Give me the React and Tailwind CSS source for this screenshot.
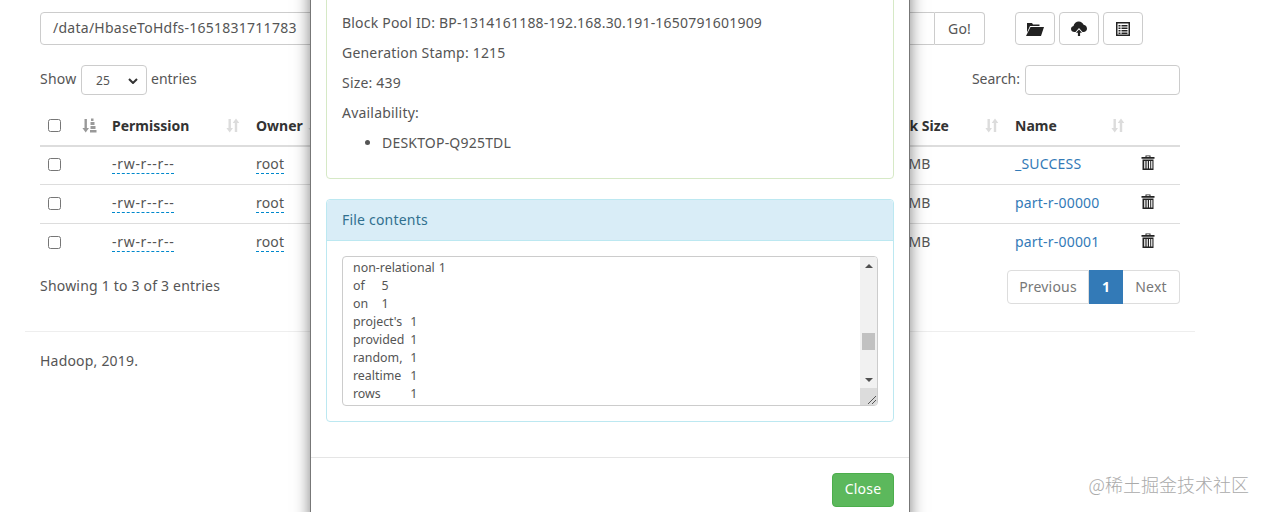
import React from 'react';

const FONT = "font-['Noto_Sans','Open_Sans',sans-serif]";

const files = [
  { name: '_SUCCESS', size: '0 B' },
  { name: 'part-r-00000', size: '439 B' },
  { name: 'part-r-00001', size: '421 B' },
];

const lines = [
  'non-relational\t1',
  'of\t5',
  'on\t1',
  "project's\t1",
  'provided\t1',
  'random,\t1',
  'realtime\t1',
  'rows\t1',
];

function SortIcon() {
  return (
    <svg width="14" height="15" viewBox="0 0 14 15" className="text-[#dcdcdc]" fill="currentColor">
      <path d="M2.500 1h2.400v9h2.100L3.700 14.500.4 10h2.100z" />
      <path d="M10 .5l3.300 4.500h-2.100v9H8.800V5H6.700z" />
    </svg>
  );
}

function SortActiveIcon() {
  return (
    <svg width="15" height="15" viewBox="0 0 15 15" className="text-[#999]" fill="currentColor">
      <path d="M2.500 1h2.400v9H7L3.700 14.500.4 10h2.100z" />
      <path d="M9 .5h2.500V3H9zM8.500 4h4v3h-4zM8.500 8h5v3h-5zM8 12h6.500v2.500H8z" />
    </svg>
  );
}

function TrashIcon() {
  return (
    <svg width="14" height="15" viewBox="0 0 14 15" fill="currentColor" className="text-[#222]">
      <path d="M4.500 2V.5h5V2h4v1.700H.5V2zM5.500 1.300V2h3v-.7z" fillRule="evenodd" />
      <path d="M1.500 4.500h11V15h-11zM3.200 6v7.500h1.200V6zM5.600 6v7.500h1.200V6zM8 6v7.500h1.200V6zM10.200 6v7.500h1.200V6z" fillRule="evenodd" />
    </svg>
  );
}

function FolderIcon() {
  return (
    <svg width="18" height="14" viewBox="0 0 18 14" fill="currentColor" className="text-[#222]">
      <path d="M1 1h5l1 1.500h6.500V4H4L1 10.500V1z" />
      <path d="M4.500 5H18l-3 9H0z" />
    </svg>
  );
}

function CloudUpIcon() {
  return (
    <svg width="16" height="15" viewBox="0 0 16 15" fill="currentColor" className="text-[#222]">
      <path d="M4.500 11H3.500C1.500 11 0 9.700 0 8c0-1.500 1-2.700 2.500-3C3 2.300 5.200.5 7.800.5c2.200 0 4 1.300 4.800 3.200C14.600 4 16 5.700 16 7.700c0 1.800-1.500 3.300-3.500 3.300h-1L8 7z" />
      <path d="M8 8.500l3 3.200H9.100V15H6.900v-3.300H5z" />
    </svg>
  );
}

function ListIcon() {
  return (
    <svg width="14" height="14" viewBox="0 0 14 14" className="text-[#222]" fill="currentColor">
      <path
        fillRule="evenodd"
        d="M0 0h14v14H0zM1.500 1.500v11h11v-11zM2.500 3h2v1.500h-2zM5.500 3h6v1.500h-6zM2.500 5.500h2V7h-2zM5.500 5.500h6V7h-6zM2.500 8h2v1.500h-2zM5.500 8h6v1.500h-6zM2.500 10.500h2V12h-2zM5.500 10.500h6V12h-6z"
      />
    </svg>
  );
}

function IconButton({ children }) {
  return (
    <button className="w-10 h-[33px] flex items-center justify-center bg-white border border-[#ccc] rounded">
      {children}
    </button>
  );
}

function Th({ children, sort = true }) {
  return (
    <th className="px-2 pt-[1px] text-left font-bold tracking-normal text-[#333] align-middle">
      <div className="flex items-center justify-between whitespace-nowrap">
        <span>{children}</span>
        {sort && <SortIcon />}
      </div>
    </th>
  );
}

function Dashed({ children, wide }) {
  return (
    <span className={`border-b border-dashed border-[#0088cc] text-[#555] ${wide ? 'tracking-[0.7px]' : ''}`}>
      {children}
    </span>
  );
}

function FileTable() {
  return (
    <table className="w-full table-fixed border-collapse text-[#555]">
      <colgroup>
        <col className="w-[34px]" />
        <col className="w-[30px]" />
        <col className="w-[144px]" />
        <col className="w-[82px]" />
        <col className="w-[90px]" />
        <col className="w-[80px]" />
        <col className="w-[200px]" />
        <col className="w-[172px]" />
        <col className="w-[135px]" />
        <col className="w-[126px]" />
        <col className="w-[47px]" />
      </colgroup>
      <thead>
        <tr className="h-[41px] border-b-2 border-[#ddd]">
          <th className="px-2 text-left align-middle">
            <input type="checkbox" className="block w-[13px] h-[13px]" />
          </th>
          <th className="px-2 text-left align-middle">
            <SortActiveIcon />
          </th>
          <Th>Permission</Th>
          <Th>Owner</Th>
          <Th>Group</Th>
          <Th>Size</Th>
          <Th>Last Modified</Th>
          <Th>Replication</Th>
          <Th>Block Size</Th>
          <Th>Name</Th>
          <th />
        </tr>
      </thead>
      <tbody>
        {files.map((f, i) => (
          <tr key={f.name} className={i === 0 ? 'h-[38px]' : 'h-[39px] border-t border-[#ddd]'}>
            <td className={i === 0 ? 'px-2 pb-[2px]' : 'px-2'}>
              <input type="checkbox" className="block w-[13px] h-[13px]" />
            </td>
            <td />
            <td className="px-2 pb-[2px]"><Dashed wide>-rw-r--r--</Dashed></td>
            <td className="px-2 pb-[2px]"><Dashed>root</Dashed></td>
            <td className="px-2 pb-[2px]"><Dashed>supergroup</Dashed></td>
            <td className="px-2 pb-[2px]">{f.size}</td>
            <td className="px-2 pb-[2px]">May 06 18:08</td>
            <td className="px-2 pb-[2px]">1</td>
            <td className="px-2 pb-[2px]">128 MB</td>
            <td className="px-2 pb-[2px] text-[#337ab7]">{f.name}</td>
            <td className="px-2 pb-[5px]"><TrashIcon /></td>
          </tr>
        ))}
      </tbody>
    </table>
  );
}

function Scrollbar() {
  return (
    <div className="w-[17px] h-full bg-[#f1f1f1] flex flex-col items-center shrink-0">
      <div className="h-[17px] flex items-center justify-center">
        <div className="w-0 h-0 border-x-[4px] border-x-transparent border-b-[4px] border-b-[#505050]" />
      </div>
      <div className="h-[59px]" />
      <div className="w-[13px] h-[17px] bg-[#c1c1c1]" />
      <div className="flex-1" />
      <div className="h-[17px] flex items-center justify-center">
        <div className="w-0 h-0 border-x-[4px] border-x-transparent border-t-[4px] border-t-[#505050]" />
      </div>
      <div className="w-full h-[17px] bg-[#dcdcdc] flex items-end justify-end">
        <svg width="12" height="12" viewBox="0 0 12 12" stroke="#555" fill="none">
          <path d="M3 11l8-8M7 11l4-4" />
        </svg>
      </div>
    </div>
  );
}

function Modal() {
  return (
    <div className="absolute inset-0 overflow-hidden flex justify-center items-end pointer-events-none">
      <div className="w-[600px] shrink-0 -mb-[11px] bg-white border border-[#777] shadow-[0_5px_15px_rgba(0,0,0,0.5)]">
        <div className="p-[15px]">
          <div className="border border-[#d6e9c6] rounded px-[15px] pt-[30px] pb-[20px] text-[#555]">
            <p className="h-[30px] leading-[30px]">Block Pool ID: BP-1314161188-192.168.30.191-1650791601909</p>
            <p className="h-[30px] leading-[30px]">Generation Stamp: 1215</p>
            <p className="h-[30px] leading-[30px]">Size: 439</p>
            <p className="h-[30px] leading-[30px]">Availability:</p>
            <ul className="list-disc pl-10">
              <li className="h-[30px] leading-[30px]">DESKTOP-Q925TDL</li>
            </ul>
          </div>
          <div className="mt-5 mb-5 border border-[#bce8f1] rounded">
            <div className="h-[41px] px-[15px] flex items-center bg-[#d9edf7] border-b border-[#bce8f1] text-[#31708f] rounded-t">
              File contents
            </div>
            <div className="p-[15px]">
              <div className="h-[150px] flex border border-[#ccc] rounded-sm overflow-hidden">
                <div className="flex-1 pl-[10px] pt-[2px] text-[12.4px] leading-[18px] tracking-normal text-[#555] whitespace-pre [tab-size:28.6px]">
                  {lines.map((l) => (
                    <div key={l}>{l}</div>
                  ))}
                </div>
                <Scrollbar />
              </div>
            </div>
          </div>
        </div>
        <div className="border-t border-[#e5e5e5] p-[15px] flex justify-end">
          <button className="w-[62px] h-[34px] bg-[#5cb85c] border border-[#4cae4c] rounded text-white pb-[2px]">Close</button>
        </div>
      </div>
    </div>
  );
}

export default function App() {
  return (
    <div className={`${FONT} relative h-[512px] w-[1264px] overflow-hidden bg-white text-sm text-[#555] tracking-[0.2px]`}>
      <div className="relative h-full w-[1220px]">
        <div className="mx-auto w-[1170px] pt-3">
          <div className="px-[15px]">
            {/* Path bar */}
            <div className="flex items-center">
              <div className="flex w-[945px] h-[33px]">
                <div className="flex-1 px-3 pb-[2px] flex items-center border border-[#ccc] rounded-l tracking-[0.26px]">/data/HbaseToHdfs-1651831711783</div>
                <div className="w-[50px] flex items-center justify-center border border-l-0 border-[#ccc] rounded-r">Go!</div>
              </div>
              <div className="flex gap-1 ml-[30px]">
                <IconButton><FolderIcon /></IconButton>
                <IconButton><CloudUpIcon /></IconButton>
                <IconButton><ListIcon /></IconButton>
              </div>
            </div>

            {/* Length and search */}
            <div className="flex items-center justify-between mt-5 h-[30px]">
              <div className="flex items-center gap-1">
                <span className="w-[37px] pb-[2px]">Show</span>
                <div className="w-[66px] h-[30px] flex items-center justify-between pl-[14px] pr-2 pt-[1px] border border-[#ccc] rounded text-xs">
                  <span>25</span>
                  <svg width="10" height="6" viewBox="0 0 10 6" fill="none" stroke="#333" strokeWidth="2">
                    <path d="M1 1l4 4 4-4" />
                  </svg>
                </div>
                <span className="pb-[2px] tracking-normal">entries</span>
              </div>
              <div className="flex items-center gap-[5px]">
                <span className="pb-[2px] tracking-normal">Search:</span>
                <div className="w-[155px] h-[30px] border border-[#ccc] rounded" />
              </div>
            </div>

            <div className="mt-[10px]">
              <FileTable />
            </div>

            {/* Table footer */}
            <div className="flex items-center justify-between mt-2">
              <span className="pb-[2px]">Showing 1 to 3 of 3 entries</span>
              <div className="flex h-[34px]">
                <div className="w-[82px] flex items-center justify-center border border-[#ddd] rounded-l text-[#777]">Previous</div>
                <div className="w-[34px] flex items-center justify-center bg-[#337ab7] text-white font-bold">1</div>
                <div className="w-[57px] flex items-center justify-center border border-l-0 border-[#ddd] rounded-r text-[#777]">Next</div>
              </div>
            </div>
          </div>

          <div className="mt-[27px] border-t border-[#eee] px-[15px] pt-[19px]">Hadoop, 2019.</div>
        </div>
        <Modal />
      </div>
      <div className="absolute right-[15px] bottom-[16px] font-['Noto_Sans_CJK_SC',sans-serif] text-lg leading-6 tracking-normal font-light text-[#aaa]">
        @稀土掘金技术社区
      </div>
    </div>
  );
}
